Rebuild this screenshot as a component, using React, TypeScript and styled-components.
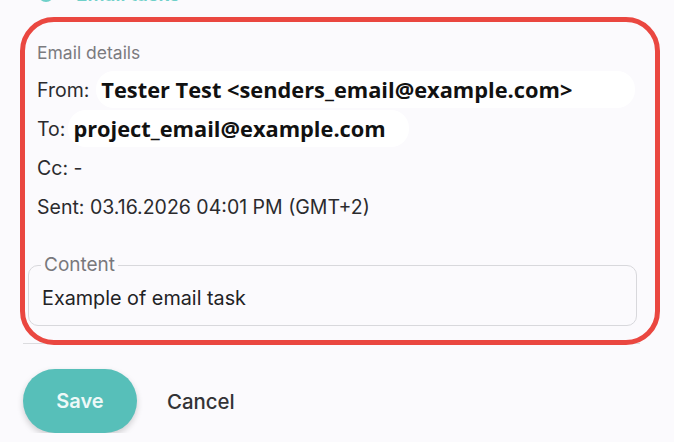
import React from 'react'
import styled, { createGlobalStyle } from 'styled-components'

const Global = createGlobalStyle`
  html, body {
    margin: 0;
    background: #fbfafd;
    overflow: hidden;
  }
  body {
    font-family: Inter, "Noto Sans", sans-serif;
  }
`

const App = () => {
  return (
    <>
      <Global />
      <Page>
        <Heading>
          <HeadingIcon />
          <span>Email tasks</span>
        </Heading>
        <Details>
          <SectionLabel>Email details</SectionLabel>
          <Row>
            From:<Value>Tester Test &lt;senders_email@example.com&gt;</Value>
          </Row>
          <Row>
            To:<Value $tight>project_email@example.com</Value>
          </Row>
          <Row>Cc: -</Row>
          <Row>Sent: 03.16.2026 04:01 PM (GMT+2)</Row>
          <Field>
            <Legend>Content</Legend>
            <FieldText>Example of email task</FieldText>
          </Field>
        </Details>
        <Divider />
        <Actions>
          <SaveButton>Save</SaveButton>
          <CancelButton>Cancel</CancelButton>
        </Actions>
        <Highlight />
      </Page>
    </>
  )
}

export default App

const Page = styled.div`
  position: relative;
  display: flow-root;
  width: 617px;
  padding-left: 23px;
`
const Heading = styled.div`
  display: flex;
  align-items: center;
  gap: 22px;
  height: 24px;
  margin-top: -18px;
  margin-bottom: -2px;
  padding-left: 15px;
  color: #6fd0c9;
  font-size: 19px;
  font-weight: 600;
`
const HeadingIcon = styled.span`
  width: 12px;
  height: 12px;
  border: 2px solid #6fd0c9;
  border-radius: 50%;
`
const Details = styled.div`
  display: flex;
  flex-direction: column;
  padding-top: 36px;
`
const SectionLabel = styled.div`
  height: 26px;
  line-height: 26px;
  margin: 0 0 4px 14px;
  font-size: 17.5px;
  color: #7b7b7f;
`
const Row = styled.div`
  display: flex;
  align-items: center;
  height: 39px;
  padding-left: 14px;
  font-size: 19.5px;
  color: #2b2b2e;
`
const Value = styled.span<{ $tight?: boolean }>`
  margin-left: ${p => (p.$tight ? '3px' : '7px')};
  padding: 4px ${p => (p.$tight ? '23px' : '63px')} 4px 5px;
  border-radius: 18px;
  background: #ffffff;
  font-family: "Open Sans", sans-serif;
  font-weight: 700;
  font-size: 21.8px;
  color: #111;
`
const Field = styled.fieldset`
  margin: 28px 0 0 5px;
  width: 609px;
  box-sizing: border-box;
  padding: 0 12px 15px;
  border: 1px solid #d8d8dc;
  border-radius: 10px;
`
const Legend = styled.legend`
  padding: 0 3px;
  line-height: 22px;
  font-size: 19px;
  color: #78787c;
`
const FieldText = styled.div`
  padding: 10px 0 0 1px;
  line-height: 24px;
  font-size: 19.8px;
  color: #222225;
`
const Divider = styled.div`
  height: 1px;
  margin-top: 17px;
  background: #dcdcdf;
`
const Actions = styled.div`
  display: flex;
  align-items: center;
  gap: 30px;
  margin-top: 25px;
`
const SaveButton = styled.button`
  width: 114px;
  height: 64px;
  border: none;
  border-radius: 32px;
  background: #57bfb9;
  box-shadow: 0 3px 6px rgba(0, 0, 0, 0.18);
  font-family: Inter, sans-serif;
  font-size: 20px;
  font-weight: 600;
  color: #eef9f8;
`
const CancelButton = styled.button`
  border: none;
  padding: 0;
  background: none;
  font-family: Inter, sans-serif;
  font-size: 20.4px;
  font-weight: 500;
  color: #333336;
`
const Highlight = styled.div`
  position: absolute;
  left: 20px;
  top: 17px;
  width: 640px;
  height: 328px;
  box-sizing: border-box;
  border: 5px solid #ea4740;
  border-radius: 34px;
  pointer-events: none;
`
